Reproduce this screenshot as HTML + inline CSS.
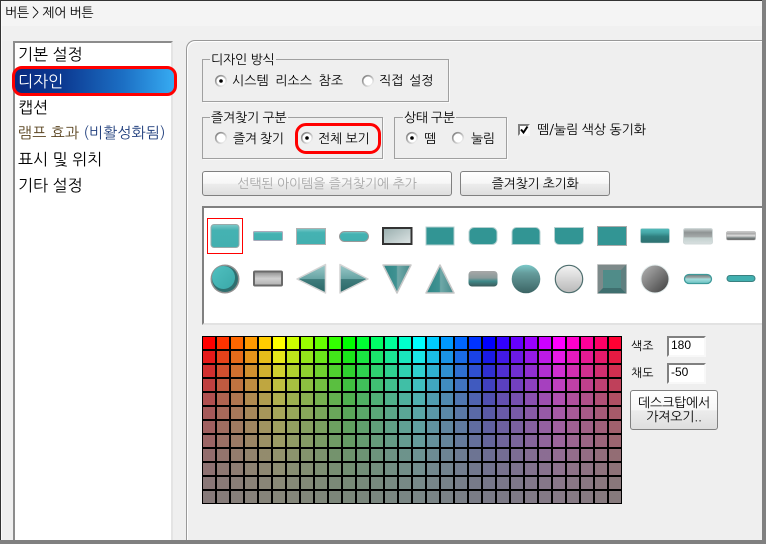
<!DOCTYPE html>
<html lang="ko">
<head>
<meta charset="utf-8">
<title>버튼 &gt; 제어 버튼</title>
<style>
html,body{margin:0;padding:0}
body{width:766px;height:544px;position:relative;overflow:hidden;background:#efefef;font-family:"WenQuanYi Zen Hei","NanumGothic","Noto Sans CJK KR",sans-serif;font-size:13px;color:#000}
.a{position:absolute;box-sizing:border-box}
.t{position:absolute;white-space:nowrap;line-height:16px;height:16px;font-family:"WenQuanYi Zen Hei","NanumGothic","Noto Sans CJK KR",sans-serif;font-size:13px}
.l{font-size:16px;line-height:22px;height:22px;left:18px}
.g{position:absolute;box-sizing:border-box;border:1px solid #a0a0a0;box-shadow:1px 1px 0 #fafafa}
.cap{background:#efefef;padding:0 1px}
.btn{position:absolute;box-sizing:border-box;border:1px solid #808080;border-radius:3px;background:linear-gradient(#fff 0,#f6f6f6 50%,#ececec 52%,#dedede 100%);text-align:center;font-family:"WenQuanYi Zen Hei","NanumGothic","Noto Sans CJK KR",sans-serif;font-size:13px}
.inp{position:absolute;box-sizing:border-box;background:#fff;border:2px solid;border-color:#808080 #f8f8f8 #f8f8f8 #808080;font-size:12px;line-height:15px;padding-left:2px;font-family:"Liberation Sans",sans-serif}
</style>
</head>
<body>
<div class="a" style="left:0;top:0;width:766px;height:26px;background:#f4f4f4"></div>
<div class="a" style="left:0;top:26px;width:766px;height:15px;background:#f0f0f0"></div>
<div class="a" style="left:0;top:0;width:766px;height:1px;background:#333"></div>
<div class="a" style="left:0;top:0;width:1px;height:544px;background:#333"></div>
<div class="a" style="left:1px;top:1px;width:1px;height:539px;background:#fafafa"></div>
<div class="t" style="left:5px;top:5px;letter-spacing:-.3px">버튼 &gt; 제어 버튼</div>

<div class="a" style="left:13px;top:41px;width:160px;height:499px;background:#fff;border:2px solid;border-color:#8c8c8c #e4e4e4 #fff #8c8c8c;border-bottom:0"></div>
<div class="a" style="left:15px;top:67px;width:159px;height:28px;border-radius:8px;background:linear-gradient(90deg,#0a2a80 0,#0c3a92 30%,#1c6fc4 68%,#36abf2 100%)"></div>
<div class="a" style="left:12px;top:66px;width:165px;height:30px;border:3px solid #f00;border-radius:10px"></div>
<div class="t l" style="top:44px">기본 설정</div>
<div class="t l" style="top:71px;color:#fff">디자인</div>
<div class="t l" style="top:97px">캡션</div>
<div class="t l" style="top:123px;font-size:15px;letter-spacing:.1px"><span style="color:#5a4420">램프 효과</span> <span style="color:#22407e">(비활성화됨)</span></div>
<div class="t l" style="top:149px">표시 및 위치</div>
<div class="t l" style="top:175px">기타 설정</div>

<div class="a" style="left:186px;top:40px;width:576px;height:500px;border-left:1px solid #999;border-top:1px solid #999;border-top-left-radius:9px;box-shadow:inset 1px 1px 0 #fff"></div>

<div class="g" style="left:202px;top:59px;width:247px;height:43px"></div>
<div class="t cap" style="left:210px;top:52px;letter-spacing:-.2px">디자인 방식</div>
<div class="t" style="left:232px;top:73px;word-spacing:3px">시스템 리소스 참조</div>
<div class="t" style="left:379px;top:73px;word-spacing:2px">직접 설정</div>

<div class="g" style="left:202px;top:117px;width:181px;height:42px"></div>
<div class="t cap" style="left:210px;top:110px;letter-spacing:-.2px">즐겨찾기 구분</div>
<div class="t" style="left:233px;top:131px;letter-spacing:-.4px">즐겨 찾기</div>
<div class="t" style="left:318px;top:131px;letter-spacing:-.2px">전체 보기</div>
<div class="a" style="left:295px;top:123px;width:86px;height:31px;border:3px solid #f00;border-radius:11px"></div>

<div class="g" style="left:394px;top:117px;width:113px;height:42px"></div>
<div class="t cap" style="left:403px;top:110px;letter-spacing:-.4px">상태 구분</div>
<div class="t" style="left:424px;top:131px">뗌</div>
<div class="t" style="left:471px;top:131px;letter-spacing:-.5px">눌림</div>

<div class="a" style="left:518px;top:124px;width:12px;height:12px;background:#fff;border:2px solid;border-color:#808080 #f8f8f8 #f8f8f8 #808080"></div>
<div class="t" style="left:537px;top:122px;letter-spacing:-.1px">뗌/눌림 색상 동기화</div>

<div class="btn" style="left:202px;top:171px;width:250px;height:25px;line-height:23px;color:#a8a8a8;letter-spacing:-.15px">선택된 아이템을 즐겨찾기에 추가</div>
<div class="btn" style="left:460px;top:171px;width:150px;height:25px;line-height:23px;letter-spacing:-.3px">즐겨찾기 초기화</div>

<div class="a" style="left:202px;top:206px;width:560px;height:119px;background:#fff;border-left:2px solid #808080;border-top:2px solid #808080;border-bottom:2px solid #e2e2e2"></div>

<svg class="a" style="left:0;top:0" width="766" height="544" viewBox="0 0 766 544" xmlns="http://www.w3.org/2000/svg">
<defs>
<linearGradient id="ring" x1="0" y1="0" x2="1" y2="1"><stop offset="0" stop-color="#777"/><stop offset=".5" stop-color="#bbb"/><stop offset="1" stop-color="#fff"/></linearGradient>
<linearGradient id="gloss" x1="0" y1="0" x2="0" y2="1"><stop offset="0" stop-color="#7cc9c9"/><stop offset=".25" stop-color="#45b2b2"/><stop offset="1" stop-color="#42b0b0"/></linearGradient>
<linearGradient id="g11" x1="0" y1="0" x2="0" y2="1"><stop offset="0" stop-color="#52bcbc"/><stop offset=".3" stop-color="#45a5a5"/><stop offset=".55" stop-color="#2f7f7f"/><stop offset="1" stop-color="#2f7070"/></linearGradient>
<linearGradient id="g12" x1="0" y1="0" x2="0" y2="1"><stop offset="0" stop-color="#c8d0d0"/><stop offset=".25" stop-color="#8f9494"/><stop offset=".55" stop-color="#a5aaaa"/><stop offset=".6" stop-color="#c3d0ce"/><stop offset="1" stop-color="#d8e0e0"/></linearGradient>
<linearGradient id="g13" x1="0" y1="0" x2="0" y2="1"><stop offset="0" stop-color="#d0d0d0"/><stop offset=".25" stop-color="#a8a8a8"/><stop offset=".5" stop-color="#dcdcdc"/><stop offset=".75" stop-color="#808888"/><stop offset="1" stop-color="#555"/></linearGradient>
<linearGradient id="g5" x1="0" y1="0" x2="1" y2="1"><stop offset="0" stop-color="#98adad"/><stop offset="1" stop-color="#dfe6e6"/></linearGradient>
<linearGradient id="fr2" x1="0" y1="0" x2="0" y2="1"><stop offset="0" stop-color="#8c8c8c"/><stop offset=".5" stop-color="#d0d0d0"/><stop offset="1" stop-color="#b0b0b0"/></linearGradient>
<linearGradient id="tri" x1="0" y1="0" x2="0" y2="1"><stop offset="0" stop-color="#9ccaca"/><stop offset=".5" stop-color="#68a4a4"/><stop offset=".52" stop-color="#3f7c7c"/><stop offset="1" stop-color="#2a6666"/></linearGradient>
<linearGradient id="tri2" x1="0" y1="0" x2="1" y2="0"><stop offset="0" stop-color="#2f8686"/><stop offset=".48" stop-color="#3f9292"/><stop offset=".52" stop-color="#70a8a8"/><stop offset="1" stop-color="#458a8a"/></linearGradient>
<linearGradient id="r7" x1="0" y1="0" x2="0" y2="1"><stop offset="0" stop-color="#a8a8a8"/><stop offset=".45" stop-color="#8a9a9a"/><stop offset=".65" stop-color="#3f8a8a"/><stop offset="1" stop-color="#3c5a5a"/></linearGradient>
<linearGradient id="c8" x1="0" y1="0" x2="0" y2="1"><stop offset="0" stop-color="#7ccaca"/><stop offset=".3" stop-color="#659b9b"/><stop offset="1" stop-color="#3b6464"/></linearGradient>
<linearGradient id="c9" x1="0" y1="0" x2="0" y2="1"><stop offset="0" stop-color="#f4f4f4"/><stop offset="1" stop-color="#b8b8b8"/></linearGradient>
<linearGradient id="c11" x1="0" y1="0" x2="1" y2="1"><stop offset="0" stop-color="#b5b5b5"/><stop offset="1" stop-color="#3f3f3f"/></linearGradient>
<linearGradient id="p12" x1="0" y1="0" x2="0" y2="1"><stop offset="0" stop-color="#707878"/><stop offset=".35" stop-color="#9aa"/><stop offset=".5" stop-color="#a3dcdc"/><stop offset="1" stop-color="#6cc4c4"/></linearGradient>
<linearGradient id="ball" x1="0" y1="0" x2="1" y2="1"><stop offset="0" stop-color="#50c0c0"/><stop offset="1" stop-color="#3aa8a8"/></linearGradient>
</defs>

<!-- radios -->
<g fill="#fff" stroke="url(#ring)" stroke-width="1.6">
<circle cx="221" cy="81" r="5.3"/><circle cx="368" cy="81" r="5.3"/>
<circle cx="221" cy="138" r="5.3"/><circle cx="307" cy="138" r="5.3"/>
<circle cx="412" cy="138" r="5.3"/><circle cx="458" cy="138" r="5.3"/>
</g>
<g fill="#000"><circle cx="221" cy="81" r="1.8"/><circle cx="307" cy="138" r="1.8"/><circle cx="412" cy="138" r="1.8"/></g>
<!-- check -->
<path d="M521 129.500 L523.500 132.500 L527.500 126.500" fill="none" stroke="#000" stroke-width="2"/>

<!-- selection -->
<rect x="207.500" y="218.500" width="35" height="35" fill="none" stroke="#f00"/>

<!-- row 1 -->
<rect x="211" y="224.500" width="28" height="23" rx="3" fill="url(#gloss)" stroke="#9aa"/>
<rect x="253.500" y="231.500" width="29" height="9" rx="1" fill="url(#gloss)" stroke="#aab"/>
<rect x="296.500" y="228.500" width="29" height="16" fill="url(#gloss)" stroke="#b0b0b0"/>
<rect x="339.500" y="231.500" width="29" height="10" rx="5" fill="url(#gloss)" stroke="#999"/>
<rect x="383" y="228" width="28.500" height="16" fill="url(#g5)" stroke="#333" stroke-width="2"/>
<rect x="426" y="227" width="28" height="18" fill="#329594" stroke="#b5d0d0"/>
<rect x="469" y="227.500" width="28" height="17" rx="5" fill="#329594" stroke="#b5d0d0"/>
<path d="M512 244.500V232a4.500 4.500 0 0 1 4.500-4.500h19a4.500 4.500 0 0 1 4.500 4.500v12.500z" fill="#329594" stroke="#b5d0d0"/>
<path d="M554.500 227.500h29v12.500a4.500 4.500 0 0 1-4.500 4.500h-20a4.500 4.500 0 0 1-4.500-4.500z" fill="#329594" stroke="#b5d0d0"/>
<rect x="597.500" y="226.500" width="29" height="19" fill="#329594" stroke="#aaa"/>
<rect x="640.500" y="228.500" width="29" height="14.500" rx="1.500" fill="url(#g11)" stroke="#c5d8d8" stroke-width=".6"/>
<rect x="683.500" y="228.500" width="29" height="15.500" rx="2" fill="url(#g12)" stroke="#d0d8d8"/>
<rect x="726.500" y="231.500" width="29" height="8.500" rx="1.500" fill="url(#g13)" stroke="#aaa" stroke-width=".6"/>

<!-- row 2 -->
<circle cx="225" cy="279" r="14.500" fill="#909090"/>
<circle cx="225" cy="279" r="13" fill="#2f6f6f"/>
<circle cx="223.500" cy="277.500" r="11.500" fill="url(#ball)"/>
<rect x="254" y="271.500" width="28" height="14" rx="1" fill="url(#fr2)" stroke="#6a6a6a" stroke-width="2"/>
<polygon points="325.500,264.500 325.500,293 297,279" fill="url(#tri)" stroke="#d4d4d4" stroke-width="1.500" stroke-linejoin="round"/>
<polygon points="340,264.500 340,293 368,279" fill="url(#tri)" stroke="#d4d4d4" stroke-width="1.500" stroke-linejoin="round"/>
<polygon points="383,265 411,265 397,293" fill="url(#tri2)" stroke="#c8c8c8" stroke-width="1.500" stroke-linejoin="round"/>
<polygon points="440,265 426,293 454,293" fill="url(#tri2)" stroke="#c8c8c8" stroke-width="1.500" stroke-linejoin="round"/>
<rect x="468.500" y="271" width="29" height="15.500" rx="3.500" fill="url(#r7)"/>
<circle cx="526" cy="279" r="14.300" fill="url(#c8)"/>
<circle cx="569" cy="279" r="13.700" fill="url(#c9)" stroke="#4f6f6f" stroke-width="1.200"/>
<rect x="597.500" y="264.500" width="29" height="29" fill="#7d8a8a" stroke="#c0c0c0" stroke-width=".7"/>
<polygon points="597.800,293.200 626.200,293.200 621,288 603,288" fill="#3f6f6f"/>
<polygon points="626.200,264.800 626.200,293.200 621,288 621,270" fill="#5f7f7f"/>
<rect x="603" y="270" width="18" height="18" fill="#508c89"/>
<circle cx="655" cy="279" r="14.500" fill="#e4eeee"/>
<circle cx="655" cy="279" r="13.500" fill="url(#c11)"/>
<rect x="684.500" y="274.500" width="27" height="9" rx="4.500" fill="url(#p12)" stroke="#3d9a9a" stroke-width="1.300"/>
<rect x="727" y="275.500" width="28" height="6" rx="3" fill="#42b0b0" stroke="#3a8080" stroke-width="1"/>
</svg>

<!-- palette -->
<div class="a" style="left:202px;top:336px;width:420px;height:168px;border:1px solid #000;background:
repeating-linear-gradient(90deg,transparent 0 12px,#000 12px 14px),
repeating-linear-gradient(180deg,transparent 0 12px,#000 12px 14px),
linear-gradient(180deg,rgba(128,128,128,0) 0 14px,rgba(128,128,128,.2) 14px 28px,rgba(128,128,128,.37) 28px 42px,rgba(128,128,128,.5) 42px 56px,rgba(128,128,128,.62) 56px 70px,rgba(128,128,128,.7) 70px 84px,rgba(128,128,128,.75) 84px 98px,rgba(128,128,128,.79) 98px 112px,rgba(128,128,128,.85) 112px 126px,rgba(128,128,128,.89) 126px 140px,rgba(128,128,128,.93) 140px 154px,rgba(128,128,128,.95) 154px 168px),
linear-gradient(90deg,#f00 0 14px,#f30 14px 28px,#f60 28px 42px,#f90 42px 56px,#fc0 56px 70px,#ff0 70px 84px,#cf0 84px 98px,#9f0 98px 112px,#6f0 112px 126px,#3f0 126px 140px,#0f0 140px 154px,#0f3 154px 168px,#0f6 168px 182px,#0f9 182px 196px,#0fc 196px 210px,#0ff 210px 224px,#0cf 224px 238px,#09f 238px 252px,#06f 252px 266px,#03f 266px 280px,#00f 280px 294px,#30f 294px 308px,#60f 308px 322px,#90f 322px 336px,#c0f 336px 350px,#f0f 350px 364px,#f0c 364px 378px,#f09 378px 392px,#f06 392px 406px,#f03 406px 420px)"></div>

<div class="t" style="left:631px;top:338px;font-size:12px">색조</div>
<div class="inp" style="left:667px;top:336px;width:39px;height:21px">180</div>
<div class="t" style="left:631px;top:365px;font-size:12px">채도</div>
<div class="inp" style="left:667px;top:363px;width:39px;height:21px">-50</div>
<div class="btn" style="left:630px;top:390px;width:88px;height:40px;line-height:14px;padding-top:5px;letter-spacing:-.2px">데스크탑에서<br>가져오기..</div>

<div class="a" style="left:762px;top:0;width:4px;height:544px;background:#808080"></div>
<div class="a" style="left:0;top:540px;width:766px;height:4px;background:#808080"></div>
</body>
</html>
